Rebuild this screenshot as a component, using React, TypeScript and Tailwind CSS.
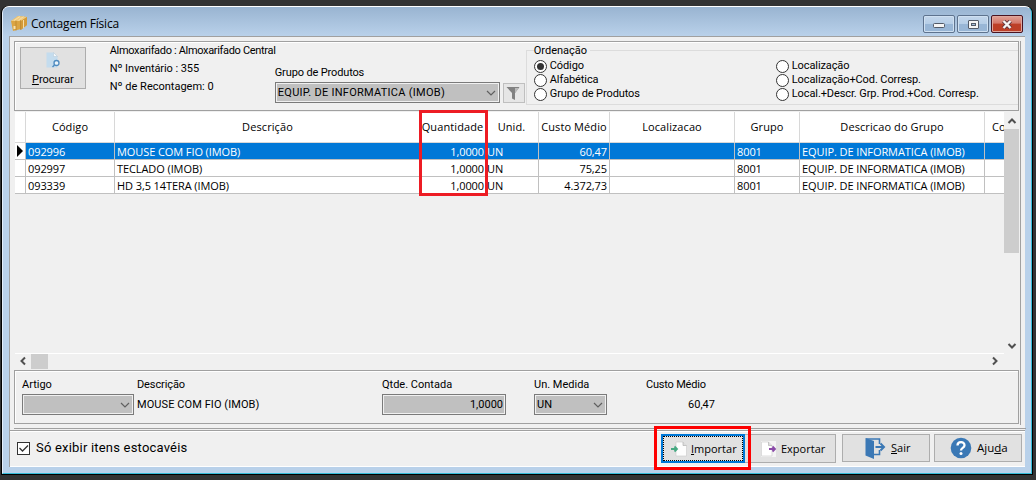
import React, { useState } from "react";

interface Product {
  code: string;
  description: string;
  quantity: string;
  unit: string;
  cost: string;
  location: string;
  group: string;
  groupName: string;
}

const products: Product[] = [
  { code: "092996", description: "MOUSE COM FIO (IMOB)", quantity: "1,0000", unit: "UN", cost: "60,47", location: "", group: "8001", groupName: "EQUIP. DE INFORMATICA (IMOB)" },
  { code: "092997", description: "TECLADO (IMOB)", quantity: "1,0000", unit: "UN", cost: "75,25", location: "", group: "8001", groupName: "EQUIP. DE INFORMATICA (IMOB)" },
  { code: "093339", description: "HD 3,5 14TERA (IMOB)", quantity: "1,0000", unit: "UN", cost: "4.372,73", location: "", group: "8001", groupName: "EQUIP. DE INFORMATICA (IMOB)" },
];

const GRID = "grid grid-cols-[11px_89px_306px_67px_51px_71px_125px_65px_185px_19px]";

export default function App() {
  const [selected, setSelected] = useState(0);
  const [order, setOrder] = useState("Código");
  const [onlyStock, setOnlyStock] = useState(true);
  const current = products[selected];

  return (
    <div className="relative w-[1036px] h-[480px] overflow-hidden bg-[#333333] pt-[6px] pl-px font-['Roboto','Liberation_Sans',sans-serif] text-[11px] leading-[14px] text-black select-none">
      <div className="flex flex-col w-[1032px] h-[469px] rounded-t-[7px] border-b border-l border-r border-black bg-black">
        <div className="flex flex-col h-[468px] rounded-t-[7px] border border-t-white border-l-[#e4eefa] border-r-[#35bcd8] border-b-[#35bcd8] bg-[#b9d1ea] px-[6px] pb-[6px] overflow-hidden">
          <TitleBar />
          <div className="flex flex-col w-[1016px] h-[431px] bg-[#f0f0f0] border-t border-l border-[#a0a0a0] border-r-white">
            <div className="flex flex-col w-[1012px] h-[389px] ml-[4px] mt-[3px] pt-[1px] pr-0 border-b border-[#a0a0a0]">
              <div className="flex h-[384px] w-[1008px]">
                <div className="flex flex-col w-[1007px] border-r border-[#a0a0a0]">
                  <Filters order={order} onOrder={setOrder} />
                  <ProductGrid selected={selected} onSelect={setSelected} />
                  <Details product={current} />
                </div>
              </div>
            </div>
            <Footer checked={onlyStock} onToggle={() => setOnlyStock(!onlyStock)} />
          </div>
        </div>
      </div>
      <div className="absolute left-[419px] top-[110px] w-[69px] h-[86px] border-3 border-[#ed1c24]" />
      <div className="absolute left-[654px] top-[426px] w-[97px] h-[44px] border-3 border-[#fe0000]" />
    </div>
  );
}

function TitleBar() {
  return (
    <div className="flex h-[29px] -mx-[6px] pl-[8px] pr-[8px] bg-linear-to-b from-[#99b4d1] to-[#b9d1ea]">
      <svg width="17" height="17" viewBox="0 0 17 17" className="mt-[8px]">
        <path d="M0 6 7 1l9 1v8l-6 4-8 2z" fill="#dba544" />
        <path d="m0 6 7-5 9 1-6 4z" fill="#f0cc82" />
        <path d="m10 6 6-4v8l-6 5z" fill="#d39a39" />
        <path d="M5 5.500v10M9.500 5v10" stroke="#b27a26" strokeWidth="0.600" />
        <path d="m3 5.500 6-4M7.500 5.500l5-4M12.500 5v8" stroke="#f7dda5" strokeWidth="1" />
        <path d="M2.500 11h2v3h-2z" fill="#f7e2b0" />
      </svg>
      <span className="ml-[3px] mt-[9px] font-['Open_Sans'] text-[12px] leading-[16px] tracking-[-0.2px]">Contagem Física</span>
      <div className="flex gap-[2px] ml-auto mt-[8px] h-[18px]">
        <CaptionButton>
          <svg width="12" height="6" viewBox="0 0 12 6" className="mt-[3px]">
            <rect x="0.500" y="0.500" width="11" height="4" rx="1" fill="#f5f5f5" stroke="#535b68" />
          </svg>
        </CaptionButton>
        <CaptionButton>
          <svg width="11" height="9" viewBox="0 0 11 9">
            <rect x="0.500" y="0.500" width="10" height="8" rx="0.500" fill="#f5f5f5" stroke="#535b68" />
            <rect x="3.500" y="3.500" width="4" height="2" fill="#a4bfdb" stroke="#535b68" />
          </svg>
        </CaptionButton>
        <CaptionButton close>
          <svg width="12" height="9" viewBox="0 0 12 9">
            <path d="m2.500 1 7 7M9.500 1l-7 7" stroke="#60343c" strokeWidth="4" />
            <path d="m2.500 1 7 7M9.500 1l-7 7" stroke="#f6f4f4" strokeWidth="2.400" />
          </svg>
        </CaptionButton>
      </div>
    </div>
  );
}

function CaptionButton({ close, children }: { close?: boolean; children: React.ReactNode }) {
  const color = close
    ? "border-[#4a1320] bg-linear-to-b from-[#e0a297] from-0% via-[#d4776a] via-45% to-[#bd3f28] to-50% shadow-[inset_0_0_0_1px_#dfa79d]"
    : "border-[#5e738e] bg-linear-to-b from-[#c3d6eb] from-0% via-[#b6cee7] via-48% to-[#98b6d6] to-50% shadow-[inset_0_0_0_1px_#cfe0f1]";
  return <button className={`flex items-center justify-center w-[32px] h-[18px] rounded-[2px] border ${color}`}>{children}</button>;
}

function Filters({ order, onOrder }: { order: string; onOrder: (v: string) => void }) {
  return (
    <div className="flex w-[1005px] h-[70px] border border-[#a0a0a0] shadow-[inset_1px_1px_0_#fff]">
      <button className="flex flex-col items-center w-[66px] h-[42px] ml-[5px] mt-[5px] border border-[#adadad] bg-[#e1e1e1] pt-[4px]">
        <svg width="16" height="17" viewBox="0 0 16 17">
          <path d="M1.500 0.500h7l4 4v11h-11z" fill="#c4dcee" />
          <path d="M8.500 0.500v4h4z" fill="#f5f9fc" stroke="#b0c4d4" strokeWidth="0.500" />
          <circle cx="11.500" cy="11" r="2.500" fill="#eaf4fb" stroke="#4e8bc0" strokeWidth="1.300" />
          <path d="m9.500 13-2 2" stroke="#4e8bc0" strokeWidth="1.500" />
        </svg>
        <span className="mt-[4px]"><u>P</u>rocurar</span>
      </button>
      <div className="w-[165px] ml-[24px] leading-[18px] whitespace-nowrap">
        <div className="tracking-[-0.33px]">Almoxarifado : Almoxarifado Central</div>
        <div className="tracking-[-0.08px]">Nº Inventário : 355</div>
        <div>Nº de Recontagem: 0</div>
      </div>
      <div className="w-[250px] mt-[24px]">
        <div className="tracking-[-0.14px]">Grupo de Produtos</div>
        <div className="flex mt-[2px]">
          <Combo value="EQUIP. DE INFORMATICA (IMOB)" width="w-[225px]" text="tracking-[0.27px]" />
          <button className="flex items-center justify-center w-[22px] h-[20px] ml-[3px] mt-px border border-[#bfbfbf] bg-[#e6e6e6]">
            <svg width="15" height="15" viewBox="0 0 15 15">
              <path d="M0.500 1h13L9 7v7l-3-1.500V7z" fill="#818181" />
              <path d="M9 2h4L9 7z" fill="#b9b9b9" />
            </svg>
          </button>
        </div>
      </div>
      <fieldset className="flex w-[494px] h-[62px] mt-[1px] ml-px pt-0">
        <div className="w-full h-[55px] mt-[7px] border border-[#dcdcdc] border-r-0 pl-[7px]">
          <legend className="relative -mt-[7px] w-[56px] bg-[#f0f0f0]">Ordenação</legend>
          <div className="grid grid-cols-[242px_1fr] grid-rows-[14px_14px_14px] grid-flow-col mt-[1px]">
            {["Código", "Alfabética", "Grupo de Produtos", "Localização", "Localização+Cod. Corresp.", "Local.+Descr. Grp. Prod.+Cod. Corresp."].map((name) => (
              <button key={name} onClick={() => onOrder(name)} className="flex items-center gap-[3px] whitespace-nowrap tracking-[-0.1px]">
                <span className="flex items-center justify-center w-[13px] h-[13px] rounded-full border border-[#333] bg-white">
                  {order === name && <span className="w-[7px] h-[7px] rounded-full bg-[#333]" />}
                </span>
                {name}
              </button>
            ))}
          </div>
        </div>
      </fieldset>
    </div>
  );
}

function Combo({ value, width, text = "" }: { value: string; width: string; text?: string }) {
  return (
    <div className={`flex items-center justify-between h-[21px] pl-[2px] pr-[3px] border border-[#7a7a7a] bg-[#c0c0c0] shadow-[inset_0_0_0_1px_#f0f0f0] ${width}`}>
      <span className={`whitespace-nowrap ${text}`}>{value}</span>
      <Chevron className="rotate-180" color="#606060" />
    </div>
  );
}

function Chevron({ className, color = "#505050", bold }: { className?: string; color?: string; bold?: boolean }) {
  return (
    <svg width="10" height="10" viewBox="0 0 10 10" className={className} fill="none" stroke={color} strokeWidth={bold ? 2 : 1.2}>
      <path d={bold ? "m1.500 7 3.500-3.500L8.500 7" : "m1 7 4-4 4 4"} />
    </svg>
  );
}

function ProductGrid({ selected, onSelect }: { selected: number; onSelect: (i: number) => void }) {
  const headers = ["", "Código", "Descrição", "Quantidade", "Unid.", "Custo Médio", "Localizacao", "Grupo", "Descricao do Grupo"];
  return (
    <div className="h-[259px] pt-px pl-px font-['Open_Sans','Noto_Sans',sans-serif]">
      <div className="flex h-[242px]">
        <div className="w-[989px] border-b border-white">
          <div className={`${GRID} h-[31px] bg-white border-b border-[#d8d8d8] tracking-[0.1px]`}>
            {headers.map((h, i) => (
              <div key={i} className={`flex items-center justify-center border-r border-[#d8d8d8] whitespace-nowrap ${h === "Quantidade" || h === "Unid." ? "pr-[3px]" : ""}`}>{h}</div>
            ))}
            <div className="flex items-center pl-[7px] overflow-hidden">Co</div>
          </div>
          {products.map((p, i) => (
            <div
              key={p.code}
              onClick={() => onSelect(i)}
              className={`${GRID} h-[17px] border-b border-[#c0c0c0] leading-[17px] tracking-[-0.09px] whitespace-nowrap ${i === selected ? "bg-[#0078d7] text-white" : "bg-white"}`}
            >
              <div className="flex items-start bg-white border-r border-[#c0c0c0]">
                {i === selected && (
                  <svg width="7" height="12" viewBox="0 0 7 12" className="ml-[2px] mt-[2px]">
                    <path d="m0 0 6 6-6 6z" fill="#000" />
                  </svg>
                )}
              </div>
              <Cell>{p.code}</Cell>
              <Cell>{p.description}</Cell>
              <Cell align="text-right pr-[3px]">{p.quantity}</Cell>
              <Cell align="pl-0 -ml-px">{p.unit}</Cell>
              <Cell align="text-right pr-[2px]">{p.cost}</Cell>
              <Cell>{p.location}</Cell>
              <Cell>{p.group}</Cell>
              <Cell>{p.groupName}</Cell>
            </div>
          ))}
        </div>
        <div className="flex flex-col items-center w-[15px] bg-[#f0f0f0]">
          <div className="flex items-center h-[17px]"><Chevron bold /></div>
          <div className="w-[15px] h-[124px] bg-[#cdcdcd]" />
          <div className="flex items-center h-[17px] mt-auto"><Chevron bold className="rotate-180" /></div>
        </div>
      </div>
      <div className="flex h-[15px] w-[988px]">
        <div className="flex justify-center w-[15px] mt-[2px]"><Chevron bold className="-rotate-90" /></div>
        <div className="w-[17px] h-[15px] ml-px bg-[#cdcdcd]" />
        <div className="flex justify-center w-[17px] ml-auto mt-[2px]"><Chevron bold className="rotate-90" /></div>
      </div>
    </div>
  );
}

function Cell({ align = "pl-[2px]", children }: { align?: string; children: React.ReactNode }) {
  return <div className={`border-r border-[#c0c0c0] overflow-hidden ${align}`}>{children}</div>;
}

function Details({ product }: { product: Product }) {
  return (
    <div className="flex w-[1005px] h-[54px] border border-[#a0a0a0] shadow-[inset_1px_1px_0_#fff] pl-[7px] pt-[7px] whitespace-nowrap">
      <div className="w-[115px]">
        <div>Artigo</div>
        <div className="mt-[2px]"><Combo value="" width="w-[112px]" /></div>
      </div>
      <div className="w-[245px]">
        <div className="tracking-[-0.1px]">Descrição</div>
        <div className="mt-[6px] tracking-[0.08px]">{product.description}</div>
      </div>
      <div className="w-[152px]">
        <div>Qtde. Contada</div>
        <div className="mt-[2px] w-[124px] h-[21px] pr-[2px] border border-[#7a7a7a] bg-[#c0c0c0] shadow-[inset_0_0_0_1px_#f0f0f0] text-right leading-[19px]">{product.quantity}</div>
      </div>
      <div className="w-[112px]">
        <div>Un. Medida</div>
        <div className="mt-[2px]"><Combo value={product.unit} width="w-[73px]" /></div>
      </div>
      <div className="w-[69px]">
        <div className="tracking-[-0.2px]">Custo Médio</div>
        <div className="mt-[6px] text-right">{product.cost}</div>
      </div>
    </div>
  );
}

function Footer({ checked, onToggle }: { checked: boolean; onToggle: () => void }) {
  return (
    <div className="flex h-[37px] mt-px border-t border-[#a0a0a0] shadow-[inset_0_1px_0_#fff] pl-[7px] border-b border-b-white">
      <button onClick={onToggle} className="flex items-center gap-[6px] h-[34px] text-[13px] tracking-[0.2px]">
        <span className="flex items-center justify-center w-[13px] h-[13px] border border-[#333] bg-white">
          {checked && (
            <svg width="11" height="11" viewBox="0 0 11 11" fill="none" stroke="#333" strokeWidth="1.300">
              <path d="m1.500 5 3 3L10 2.500" />
            </svg>
          )}
        </span>
        Só exibir itens estocavéis
      </button>
      <div className="flex ml-auto mr-[3px] mt-[3px] font-['Open_Sans','Noto_Sans',sans-serif] text-[11px]">
        <button className="flex items-center w-[84px] h-[29px] border-2 border-[#0078d7] bg-[#e1e1e1]">
          <span className="flex items-center w-full h-full border border-dotted border-black pl-[6px]">
            <svg width="17" height="16" viewBox="0 0 17 16">
              <path d="M6 1h7l3.500 3.500V15H6z" fill="#fdfdfd" stroke="#cfcfcf" strokeWidth="0.700" />
              <path d="M13 1v3.500h3.500" fill="#ddd" stroke="#aaa" strokeWidth="0.600" />
              <path d="M1 8h6M4.500 5.500 7 8l-2.500 2.500" fill="none" stroke="#46a982" strokeWidth="1.800" />
            </svg>
            <span className="ml-[4px]"><u>I</u>mportar</span>
          </span>
        </button>
        <button className="flex items-center w-[91px] h-[29px] border border-l-0 border-[#adadad] bg-[#e1e1e1] pl-[15px]">
          <svg width="17" height="16" viewBox="0 0 17 16">
            <path d="M1 0h15v16H1z" fill="#f4f4f4" />
            <path d="M1.500 1h7L12 4.500V15H1.500z" fill="#fff" stroke="#cfcfcf" strokeWidth="0.700" />
            <path d="M8.500 1v3.500H12" fill="#ddd" stroke="#aaa" strokeWidth="0.600" />
            <path d="M9 8h6M12.500 5.500 15 8l-2.500 2.500" fill="none" stroke="#8a4aa8" strokeWidth="1.800" />
          </svg>
          <span className="ml-[4px]">Exportar</span>
        </button>
        <button className="flex items-center w-[88px] h-[28px] ml-[6px] border border-[#adadad] bg-[#e1e1e1] pl-[22px]">
          <svg width="21" height="22" viewBox="0 0 21 22">
            <path d="M1 2h13.500v5M14.500 13v4.500H9" fill="none" stroke="#3b78b5" strokeWidth="1.600" />
            <path d="m0.500 1 8.500 3v18l-8.500-3.500z" fill="#3b78b5" />
            <path d="M10.500 10h9M15.500 6.500 19 10l-3.500 3.500" fill="none" stroke="#3b78b5" strokeWidth="2" />
          </svg>
          <span className="ml-[5px]"><u>S</u>air</span>
        </button>
        <button className="flex items-center w-[88px] h-[28px] ml-[4px] border border-[#adadad] bg-[#e1e1e1] pl-[15px]">
          <svg width="22" height="22" viewBox="0 0 22 22">
            <circle cx="11" cy="11" r="10.300" fill="#3a78b5" />
            <path d="M7.500 8.500C7.500 4 14.500 4 14.500 8.200c0 2.800-3.500 2.600-3.500 5.300" fill="none" stroke="#fff" strokeWidth="2.300" />
            <circle cx="11" cy="16.500" r="1.500" fill="#fff" />
          </svg>
          <span className="ml-[5px] text-[11.5px]">Aju<u>d</u>a</span>
        </button>
      </div>
    </div>
  );
}
